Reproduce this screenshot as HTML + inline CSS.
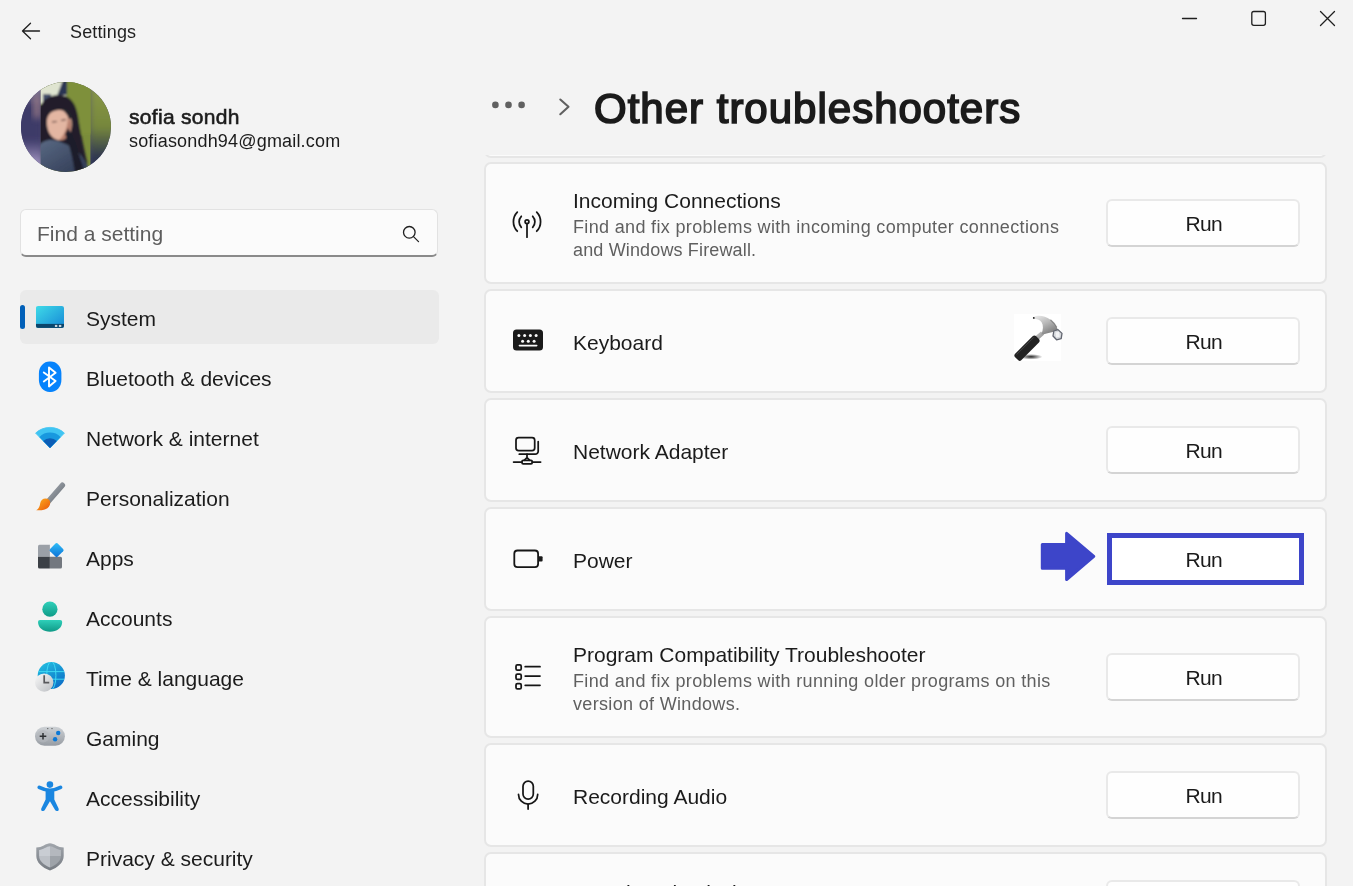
<!DOCTYPE html>
<html><head><meta charset="utf-8">
<style>
html,body{margin:0;padding:0;}
body{width:1353px;height:886px;overflow:hidden;background:#f3f3f3;position:relative;font-family:"Liberation Sans",sans-serif;color:#1b1b1b;}
.a{position:absolute;}
.t{position:absolute;white-space:nowrap;line-height:1.117;will-change:transform;}
.nav{font-size:21px;left:85.7px;}
.card{position:absolute;left:484px;width:843px;background:#fbfbfb;border:2px solid #e6e6e6;border-radius:7px;box-sizing:border-box;}
.ct{position:absolute;left:572.5px;font-size:21px;white-space:nowrap;line-height:1.117;color:#1b1b1b;will-change:transform;}
.cd{position:absolute;left:573.3px;font-size:18px;white-space:nowrap;line-height:1.117;color:#5f5f5f;will-change:transform;}
.btn{position:absolute;left:1106px;width:194px;height:48px;background:#fefefe;border:2px solid #e9e9e9;border-bottom-color:#d4d4d4;border-radius:6px;box-sizing:border-box;}
.run{position:absolute;left:1107px;width:193px;text-align:center;font-size:21px;letter-spacing:-0.6px;text-indent:0.6px;line-height:1.117;color:#1b1b1b;will-change:transform;}
svg{position:absolute;overflow:visible;}
</style></head><body>

<!-- title bar -->
<svg style="left:0;top:0" width="1353" height="60">
  <g fill="none" stroke="#1f1f1f" stroke-width="1.3" stroke-linecap="round" stroke-linejoin="round">
    <path d="M30.5 23.2 L22.5 31 L30.5 38.8 M22.5 31 H39.5"/>
    <path d="M1182.5 18.5 H1196.5"/>
    <rect x="1251.8" y="11.5" width="13.6" height="13.8" rx="2"/>
    <path d="M1320.5 11.5 L1334.5 25.5 M1334.5 11.5 L1320.5 25.5"/>
  </g>
</svg>
<div class="t" style="left:70px;top:22px;font-size:18px;letter-spacing:0.15px;color:#1f1f1f">Settings</div>

<!-- avatar -->
<svg style="left:21px;top:82px" width="90" height="90" viewBox="0 0 90 90">
  <defs>
    <clipPath id="cAv"><circle cx="45" cy="45" r="45"/></clipPath>
    <clipPath id="cMid"><rect x="19.7" y="0" width="49.9" height="90"/></clipPath>
    <filter id="bl1" x="-50%" y="-50%" width="200%" height="200%"><feGaussianBlur stdDeviation="3.5"/></filter>
    <filter id="bl2" x="-20%" y="-20%" width="140%" height="140%"><feGaussianBlur stdDeviation="1.1"/></filter>
    <linearGradient id="avL" x1="0" y1="0" x2="0" y2="1"><stop offset="0" stop-color="#c8b6c4"/><stop offset="0.3" stop-color="#3e3a66"/><stop offset="0.62" stop-color="#3c3a68"/><stop offset="0.9" stop-color="#baaad6"/></linearGradient>
    <linearGradient id="avR" x1="0" y1="0" x2="0" y2="1"><stop offset="0" stop-color="#8e9c4a"/><stop offset="0.5" stop-color="#76873c"/><stop offset="0.78" stop-color="#2e3650"/><stop offset="1" stop-color="#262c4c"/></linearGradient>
    <linearGradient id="avS" x1="0" y1="0" x2="1" y2="1"><stop offset="0" stop-color="#5a6a84"/><stop offset="1" stop-color="#2c3650"/></linearGradient>
  </defs>
  <g clip-path="url(#cAv)">
    <rect x="0" y="0" width="90" height="90" fill="#4a4870"/>
    <rect x="-8" y="-8" width="30" height="106" fill="url(#avL)" filter="url(#bl1)"/>
    <rect x="13" y="14" width="6" height="22" fill="#c89c98" opacity="0.7" filter="url(#bl1)"/>
    <rect x="68" y="-8" width="30" height="106" fill="url(#avR)" filter="url(#bl1)"/>
    <g clip-path="url(#cMid)">
      <rect x="19.7" y="0" width="50" height="90" fill="#7a8c3a"/>
      <g filter="url(#bl2)">
        <rect x="15" y="-4" width="30" height="26" fill="#dfe4d0"/>
        <rect x="22" y="12" width="8" height="9" fill="#44506c"/>
        <path d="M36 14 L42 -2 L56 -2 L50 12 Z" fill="#2c3552"/>
        <rect x="46" y="-4" width="26" height="56" fill="#7e903a"/>
        <path d="M17 30 C20 17 30 12 40 13 C50 14 55 22 57 34 C59 48 62 62 66 80 L66 94 L40 94 L17 64 Z" fill="#201e2a"/>
        <path d="M26 38 C27 29 36 26 44 29 C50 32 52 40 50 48 C48 55 43 59 37 58 C30 57 25 48 26 38 Z" fill="#e3b6a2"/>
        <path d="M47 34 C51 38 51 47 48 53 C45 57 42 58 38 58 C44 52 47 44 47 34Z" fill="#b9806e"/>
        <path d="M31 40 L36 39.5 M40 38.5 L45 37.5" stroke="#4a3030" stroke-width="1.2"/>
        <path d="M38 26 C46 24 51 29 52 36 L48 37 C46 31 42 28 38 26Z" fill="#24202c"/>
        <path d="M17 64 C24 56 34 57 42 61 C52 65 62 70 70 92 L17 92 Z" fill="url(#avS)"/>
        <path d="M47 46 C53 56 58 70 64 92 L54 92 C52 76 48 62 44 52 Z" fill="#1e1c2a"/>
      </g>
    </g>
  </g>
</svg>

<div class="t" style="left:128.5px;top:105.4px;font-size:21px;letter-spacing:0.3px;-webkit-text-stroke:0.6px #1b1b1b;color:#1b1b1b">sofia sondh</div>
<div class="t" style="left:128.5px;top:131.4px;font-size:18px;letter-spacing:0.18px;color:#1b1b1b">sofiasondh94@gmail.com</div>

<!-- search -->
<div class="a" style="left:20px;top:208.5px;width:418px;height:48px;background:#fbfbfb;border:1px solid #e2e2e2;border-bottom:2px solid #8a8a8a;border-radius:6px;box-sizing:border-box"></div>
<div class="t" style="left:37px;top:221.6px;font-size:21px;color:#5d5d5d">Find a setting</div>
<svg style="left:0;top:0" width="1" height="1">
  <g fill="none" stroke="#1f1f1f" stroke-width="1.3" stroke-linecap="round">
    <circle cx="409.3" cy="232.3" r="5.8"/>
    <path d="M413.5 236.6 L418.5 241.6"/>
  </g>
</svg>

<!-- nav -->
<div class="a" style="left:20px;top:290px;width:419px;height:54px;background:#eaeaea;border-radius:6px"></div>
<div class="a" style="left:20px;top:305px;width:5px;height:24px;background:#005fb8;border-radius:3px"></div>
<div class="t nav" style="top:307px">System</div>
<div class="t nav" style="top:367px">Bluetooth &amp; devices</div>
<div class="t nav" style="top:427px">Network &amp; internet</div>
<div class="t nav" style="top:487px">Personalization</div>
<div class="t nav" style="top:547px">Apps</div>
<div class="t nav" style="top:607px">Accounts</div>
<div class="t nav" style="top:667px">Time &amp; language</div>
<div class="t nav" style="top:727px">Gaming</div>
<div class="t nav" style="top:787px">Accessibility</div>
<div class="t nav" style="top:847px">Privacy &amp; security</div>

<!-- nav icons -->
<svg style="left:0;top:0" width="1" height="1">
  <defs>
    <linearGradient id="gSys" x1="0" y1="0" x2="1" y2="1"><stop offset="0" stop-color="#3fdbe8"/><stop offset="1" stop-color="#1688d6"/></linearGradient>
    <linearGradient id="gBt" x1="0" y1="0" x2="0" y2="1"><stop offset="0" stop-color="#1b8cff"/><stop offset="1" stop-color="#0570ea"/></linearGradient>
    <linearGradient id="gBrush" x1="0" y1="0" x2="1" y2="1"><stop offset="0" stop-color="#ffb21e"/><stop offset="1" stop-color="#e9560b"/></linearGradient>
    <linearGradient id="gHandle" x1="0" y1="0" x2="1" y2="1"><stop offset="0" stop-color="#a8aeb5"/><stop offset="1" stop-color="#646a72"/></linearGradient>
    <linearGradient id="gDia" x1="0" y1="0" x2="1" y2="1"><stop offset="0" stop-color="#30c0f8"/><stop offset="1" stop-color="#0a6fd6"/></linearGradient>
    <linearGradient id="gAcc" x1="0" y1="0" x2="0" y2="1"><stop offset="0" stop-color="#2fd0ba"/><stop offset="1" stop-color="#0f9a87"/></linearGradient>
    <linearGradient id="gGlobe" x1="0.2" y1="0" x2="0.8" y2="1"><stop offset="0" stop-color="#22bde0"/><stop offset="1" stop-color="#0a6ac6"/></linearGradient>
    <linearGradient id="gClock" x1="0" y1="0" x2="1" y2="1"><stop offset="0" stop-color="#fafafa"/><stop offset="1" stop-color="#b9bcc0"/></linearGradient>
    <linearGradient id="gPad" x1="0" y1="0" x2="0" y2="1"><stop offset="0" stop-color="#cdd1d5"/><stop offset="1" stop-color="#979ca3"/></linearGradient>
    <linearGradient id="gShield" x1="0" y1="0" x2="0" y2="1"><stop offset="0" stop-color="#a0a5ab"/><stop offset="1" stop-color="#767b82"/></linearGradient>
    <clipPath id="cSys"><rect x="35.9" y="305.9" width="28.1" height="22" rx="2.2"/></clipPath>
    <clipPath id="cGlobe"><circle cx="51.3" cy="675.5" r="13.6"/></clipPath>
  </defs>
  <!-- system -->
  <g clip-path="url(#cSys)">
    <rect x="35.9" y="305.9" width="28.1" height="22" fill="url(#gSys)"/>
    <rect x="35.9" y="323.9" width="28.1" height="4" fill="#0b456b"/>
    <rect x="54.9" y="324.9" width="2.4" height="2.1" fill="#c9d5de"/>
    <rect x="58.9" y="324.9" width="2.4" height="2.1" fill="#c9d5de"/>
  </g>
  <!-- bluetooth -->
  <rect x="38.9" y="361.6" width="22.5" height="30.3" rx="10.6" ry="11.8" fill="#0683fc"/>
  <path d="M43.8 372.4 L55.6 381 L49 386.4 V367.4 L55.6 372.8 L43.8 381.4" fill="none" stroke="#fff" stroke-width="1.9" stroke-linecap="round" stroke-linejoin="round"/>
  <!-- wifi -->
  <g>
    <path d="M50 448 L35.6 433.1 A21 21 0 0 1 64.4 433.1 Z" fill="#40c4f2" stroke="#40c4f2" stroke-width="0.8" stroke-linejoin="round"/>
    <path d="M50 448 L39.4 437 A15 15 0 0 1 60.6 437 Z" fill="#1898df"/>
    <path d="M50 448 L43.2 441 A9.6 9.6 0 0 1 56.8 441 Z" fill="#0b5db6"/>
  </g>
  <!-- personalization -->
  <path d="M62.4 485.2 L47.4 502.4" stroke="url(#gHandle)" stroke-width="5.4" stroke-linecap="round"/>
  <path d="M45.5 498.5 C49.5 498.5 51 501.5 49.8 505 C48.5 509 43 511 36.2 510.2 C39 508.8 39.8 506 40.2 503.3 C40.8 500.3 42.8 498.5 45.5 498.5 Z" fill="url(#gBrush)"/>
  <!-- apps -->
  <path d="M39.5 544.8 H49.9 V556.7 H38 V546.3 A1.5 1.5 0 0 1 39.5 544.8 Z" fill="#9ba0a7"/>
  <path d="M38 556.7 H49.9 V568.5 H39.5 A1.5 1.5 0 0 1 38 567 Z" fill="#3c4046"/>
  <path d="M49.9 556.7 H60.5 A1.5 1.5 0 0 1 62 558.2 V567 A1.5 1.5 0 0 1 60.5 568.5 H49.9 Z" fill="#73787f"/>
  <rect x="51.2" y="544.7" width="10.8" height="10.8" rx="1.6" transform="rotate(45 56.6 550.1)" fill="url(#gDia)"/>
  <!-- accounts -->
  <circle cx="49.9" cy="609.2" r="7.6" fill="url(#gAcc)"/>
  <path d="M40 619.9 H60.2 Q62.2 619.9 62.2 621.9 C62.2 627.8 56.8 631.7 50.1 631.7 C43.4 631.7 38 627.8 38 621.9 Q38 619.9 40 619.9 Z" fill="url(#gAcc)"/>
  <!-- time & language -->
  <circle cx="51.3" cy="675.5" r="13.6" fill="url(#gGlobe)"/>
  <g clip-path="url(#cGlobe)" fill="none" stroke="#3fd8f2" stroke-width="1.0">
    <ellipse cx="51.3" cy="675.5" rx="4.6" ry="14.2"/>
    <path d="M37 671.6 H66 M37 679.2 H66"/>
  </g>
  <circle cx="44.2" cy="682.6" r="9.2" fill="url(#gClock)"/>
  <path d="M44.2 676 V682.6 H48.4" fill="none" stroke="#58595c" stroke-width="1.7" stroke-linecap="square"/>
  <!-- gaming -->
  <rect x="35" y="726.8" width="29.9" height="19" rx="9.5" fill="url(#gPad)"/>
  <circle cx="43" cy="736.3" r="6.2" fill="#b4b8bd" opacity="0.6"/>
  <path d="M43 733 V739.6 M39.7 736.3 H46.3" stroke="#2e3034" stroke-width="1.5"/>
  <circle cx="58.2" cy="733" r="2.2" fill="#0a78d7"/>
  <circle cx="55.1" cy="739.3" r="2.2" fill="#0a78d7"/>
  <circle cx="47.8" cy="728.6" r="0.6" fill="#444"/><circle cx="52" cy="728.6" r="0.6" fill="#444"/>
  <!-- accessibility -->
  <circle cx="49.9" cy="784.6" r="3.3" fill="#1a86e0"/>
  <path d="M39.3 787.4 Q45 790.3 49.9 790.3 Q54.8 790.3 60.5 787.4" fill="none" stroke="#1a86e0" stroke-width="3.8" stroke-linecap="round"/>
  <path d="M45.6 790 H54.3 V799.5 L58.6 808.4 Q59.3 811 56.8 811 Q55.7 811 55.1 810 L49.95 801.2 L44.8 810 Q44.2 811 43.1 811 Q40.6 811 41.3 808.4 L45.6 799.5 Z" fill="#1a86e0"/>
  <!-- privacy -->
  <path d="M36.3 847.6 C42 847.6 46 843.3 50 843.3 C54 843.3 58 847.6 63.7 847.6 V856 C63.7 862.5 58 867.5 50 870.6 C42 867.5 36.3 862.5 36.3 856 Z" fill="url(#gShield)"/>
  <path d="M50 846.3 C46.5 846.3 43.2 849.9 39.1 850.1 V856 H50 Z" fill="#c9cdd3"/>
  <path d="M50 846.3 C53.5 846.3 56.8 849.9 60.9 850.1 V856 H50 Z" fill="#b4b8be"/>
  <path d="M39.1 856 H50 V867.5 C43.5 864.8 39.1 861 39.1 856 Z" fill="#bdc1c7"/>
  <path d="M50 856 H60.9 C60.9 861 56.5 864.8 50 867.5 Z" fill="#9ea3a9"/>
</svg>

<!-- right header -->
<svg style="left:0;top:0" width="1" height="1">
  <g fill="#606060"><circle cx="495.4" cy="104.9" r="3.3"/><circle cx="508.5" cy="104.9" r="3.3"/><circle cx="521.6" cy="104.9" r="3.3"/></g>
  <path d="M560.3 99.5 L568.5 106.8 L560.3 114.2" fill="none" stroke="#606060" stroke-width="2.1" stroke-linecap="round" stroke-linejoin="round"/>
</svg>
<div class="t" style="left:593.5px;top:85.5px;font-size:42px;letter-spacing:1px;-webkit-text-stroke:1.7px #1b1b1b;color:#1b1b1b">Other troubleshooters</div>

<!-- scroll area -->
<div class="a" style="left:0;top:155px;width:1353px;height:731px;overflow:hidden">
  <div class="card" style="top:-139px;height:142px"></div>
</div>
<div class="card" style="top:162px;height:122px"></div>
<div class="card" style="top:289px;height:104px"></div>
<div class="card" style="top:398px;height:104px"></div>
<div class="card" style="top:507px;height:104px"></div>
<div class="card" style="top:616px;height:122px"></div>
<div class="card" style="top:743px;height:104px"></div>
<div class="card" style="top:852px;height:104px"></div>

<!-- card texts -->
<div class="ct" style="top:189px">Incoming Connections</div>
<div class="cd" style="top:217px;letter-spacing:0.34px">Find and fix problems with incoming computer connections</div>
<div class="cd" style="top:240px;letter-spacing:0.15px">and Windows Firewall.</div>
<div class="ct" style="top:331px">Keyboard</div>
<div class="ct" style="top:440px">Network Adapter</div>
<div class="ct" style="top:549px">Power</div>
<div class="ct" style="top:643px">Program Compatibility Troubleshooter</div>
<div class="cd" style="top:670.5px;letter-spacing:0.34px">Find and fix problems with running older programs on this</div>
<div class="cd" style="top:693.5px;letter-spacing:0.33px">version of Windows.</div>
<div class="ct" style="top:785px">Recording Audio</div>
<div class="ct" style="top:880.5px;letter-spacing:-0.35px">Search and Indexing</div>

<!-- buttons -->
<div class="btn" style="top:199px"></div><div class="run" style="top:211.5px">Run</div>
<div class="btn" style="top:317px"></div><div class="run" style="top:329.5px">Run</div>
<div class="btn" style="top:426px"></div><div class="run" style="top:438.5px">Run</div>
<div class="a" style="left:1107px;top:533px;width:197px;height:52px;border:5px solid #3d45c9;background:#fff;box-sizing:border-box"></div><div class="run" style="top:547.5px">Run</div>
<div class="btn" style="top:653px"></div><div class="run" style="top:665.5px">Run</div>
<div class="btn" style="top:771px"></div><div class="run" style="top:783.5px">Run</div>
<div class="btn" style="top:880px"></div>

<!-- card icons -->
<svg style="left:505px;top:200px" width="50" height="50">
  <g fill="none" stroke="#161616" stroke-width="1.75" stroke-linecap="round">
    <circle cx="22" cy="21.7" r="1.9"/>
    <path d="M22 23.6 V37.2"/>
    <path d="M12.3 12.2 A13.6 13.6 0 0 0 12.3 31.2"/>
    <path d="M31.7 12.2 A13.6 13.6 0 0 1 31.7 31.2"/>
    <path d="M16.3 16.3 A8 8 0 0 0 16.3 27.3"/>
    <path d="M27.7 16.3 A8 8 0 0 1 27.7 27.3"/>
  </g>
</svg>
<svg style="left:500px;top:315px" width="50" height="50">
  <rect x="13" y="14.6" width="30" height="20.8" rx="3.5" fill="#1a1a1a"/>
  <g fill="#fbfbfb">
    <circle cx="18.9" cy="20.6" r="1.5"/><circle cx="24.6" cy="20.6" r="1.5"/><circle cx="30.4" cy="20.6" r="1.5"/><circle cx="36.1" cy="20.6" r="1.5"/>
    <circle cx="22.6" cy="26.3" r="1.5"/><circle cx="28.3" cy="26.3" r="1.5"/><circle cx="34.1" cy="26.3" r="1.5"/>
    <rect x="18.6" y="29.8" width="18.9" height="1.6" rx="0.8"/>
  </g>
</svg>
<svg style="left:505px;top:425px" width="50" height="50">
  <g fill="none" stroke="#161616" stroke-width="1.75" stroke-linecap="round" stroke-linejoin="round">
    <rect x="11" y="12.7" width="18.7" height="13" rx="2.6"/>
    <path d="M33.2 16.6 V26.2 A3 3 0 0 1 30.2 29.2 H14.3"/>
    <path d="M22 29.2 V32.5 L19.5 35.2 M22 32.5 L24.5 35.2"/>
    <rect x="17" y="35.3" width="10.2" height="3.6" rx="1.2"/>
    <path d="M8.6 37.1 H17 M27.2 37.1 H35.6"/>
  </g>
</svg>
<svg style="left:505px;top:535px" width="50" height="50">
  <rect x="9.3" y="15.5" width="23.8" height="16.7" rx="3.2" fill="none" stroke="#161616" stroke-width="1.8"/>
  <rect x="33" y="21.2" width="4.6" height="5.3" rx="1" fill="#1a1a1a"/>
</svg>
<svg style="left:505px;top:652px" width="50" height="50">
  <g fill="none" stroke="#161616" stroke-width="1.75" stroke-linecap="round">
    <rect x="11" y="12.9" width="5.2" height="5.2" rx="1.4"/>
    <rect x="11" y="22.2" width="5.2" height="5.2" rx="1.4"/>
    <rect x="11" y="31.6" width="5.2" height="5.2" rx="1.4"/>
    <path d="M20.2 14.7 H35 M20.2 24 H35 M20.2 33.3 H35"/>
  </g>
</svg>
<svg style="left:505px;top:770px" width="50" height="50">
  <g fill="none" stroke="#161616" stroke-width="1.75" stroke-linecap="round">
    <rect x="18" y="11" width="10.3" height="18.1" rx="5.15"/>
    <path d="M13.5 24.4 A9.6 9.6 0 0 0 32.7 24.4"/>
    <path d="M23.1 34 V39"/>
  </g>
</svg>

<!-- hammer -->
<svg style="left:1014px;top:314px" width="47" height="47" viewBox="0 0 47 47">
  <defs>
    <linearGradient id="hm1" x1="0" y1="0" x2="0.7" y2="1"><stop offset="0" stop-color="#f0f0f0"/><stop offset="0.5" stop-color="#b9b9b9"/><stop offset="1" stop-color="#7a7a7a"/></linearGradient>
    <linearGradient id="hm2" x1="0" y1="0" x2="1" y2="1"><stop offset="0" stop-color="#d8d8d8"/><stop offset="1" stop-color="#808080"/></linearGradient>
    <radialGradient id="hsh" cx="0.5" cy="0.5" r="0.5"><stop offset="0" stop-color="#000" stop-opacity="0.85"/><stop offset="1" stop-color="#000" stop-opacity="0"/></radialGradient>
    <filter id="hbl"><feGaussianBlur stdDeviation="0.3"/></filter>
  </defs>
  <rect width="47" height="47" fill="#fff"/>
  <ellipse cx="17" cy="42.8" rx="11.5" ry="2.8" fill="url(#hsh)"/>
  <g filter="url(#hbl)">
    <path d="M19.8 23.5 L27 17.5 L30.2 20.4 L23.2 26.8 Z" fill="url(#hm2)"/>
    <path d="M0.9 40 L18.6 22.3 C19.6 21.3 21.2 21.3 22.2 22.3 L24.9 25 C25.9 26 25.9 27.6 24.9 28.6 L7.2 46.3 C6.4 47.1 5.1 47.1 4.3 46.3 L0.9 42.9 C0.1 42.1 0.1 40.8 0.9 40 Z" fill="#222"/>
    <path d="M2.6 40.6 L19.8 23.4" stroke="#5c5c5c" stroke-width="0.9" opacity="0.7"/>
    <path d="M19.3 3 C24 0.6 31 1.6 36.5 5.8 C39.2 8 41.2 10.5 42.8 13.2 L44 16.2 L38.6 18 C36 18.6 33 19.2 30.8 19.9 L27.4 20.4 C29.3 15.5 29.5 11.4 27.6 8.3 C25.8 5.7 22.8 4.7 20.3 5 C19 5.2 18.4 3.6 19.3 3 Z" fill="url(#hm1)"/>
    <path d="M36.5 5.8 C39.2 8 41.2 10.5 42.8 13.2" stroke="#4f4f4f" stroke-width="1.1" fill="none" opacity="0.55"/>
    <path d="M39.8 17 L44 15.6 L48 19.4 L47.2 24.6 L42.6 25.8 L39 22 Z" fill="#d4d7db" stroke="#626670" stroke-width="1.3" stroke-linejoin="round"/>
    <path d="M41.4 18.4 L45 17.8 L45.8 22.8 L42.2 23.4 Z" fill="#f2f3f5"/>
    <circle cx="19.8" cy="3.9" r="0.9" fill="#1a1a1a"/>
  </g>
</svg>

<!-- arrow -->
<svg style="left:0;top:0" width="1" height="1">
  <path d="M1042.3 544.4 H1066.6 V533.3 L1093.8 556.4 L1066.6 579.5 V568.3 H1042.3 Z" fill="#3d45c9" stroke="#3d45c9" stroke-width="3" stroke-linejoin="round"/>
</svg>

</body></html>
